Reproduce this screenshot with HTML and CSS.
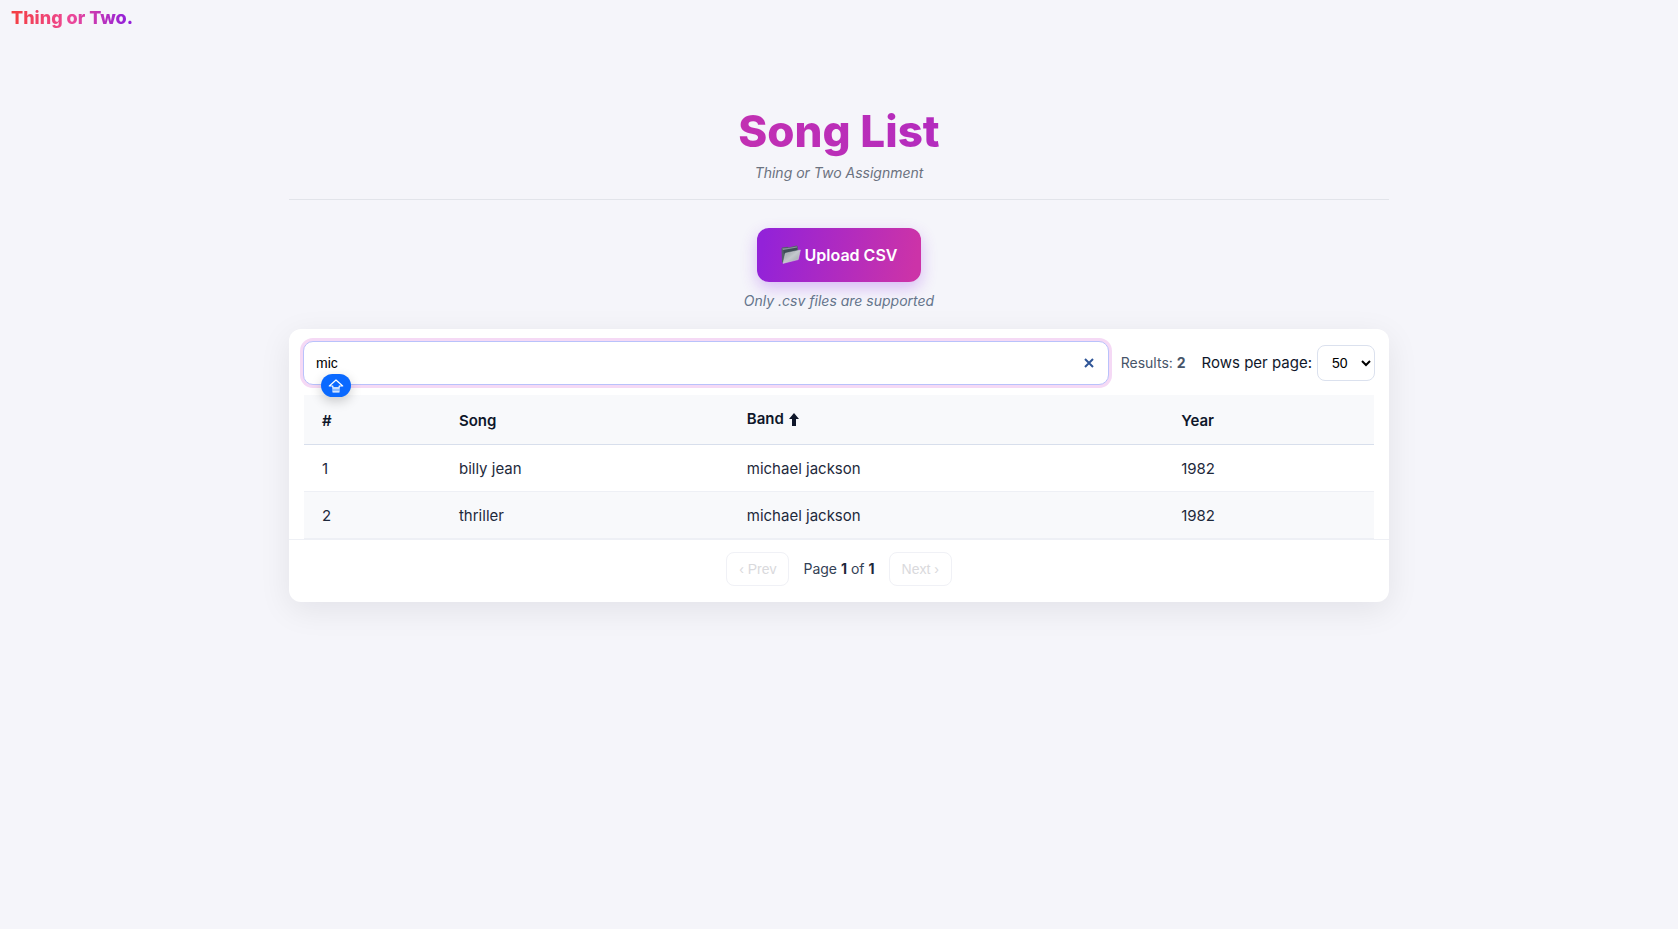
FILE: index.html
```html
<!DOCTYPE html>
<html lang="en">
<head>
<meta charset="utf-8">
<title>Song List</title>
<meta name="viewport" content="width=device-width, initial-scale=1">
<link rel="stylesheet" href="styles.css">
</head>
<body>
<nav class="topbar"><a class="brand" href="#">Thing or Two.</a></nav>
<main class="page">
  <header class="page-header">
    <h1 class="title">Song List</h1>
    <p class="subtitle">Thing or Two Assignment</p>
  </header>
  <section class="upload">
    <button class="upload-btn" type="button">
      <svg class="folder" viewBox="0 0 20 20" aria-hidden="true">
        <defs>
          <linearGradient id="front" x1="0" y1="0" x2="1" y2="1">
            <stop offset="0" stop-color="#8f979f"/><stop offset="0.5" stop-color="#c3c8cc"/><stop offset="1" stop-color="#9aa1a8"/>
          </linearGradient>
        </defs>
        <path d="M0.5 3.2 1.2 2.4 6.5 1.8 7.6 2.6 15.6.6 16.6 1.6 17 6 2 18 1 17z" fill="#52606a"/>
        <path d="M1.2 3.6 7 2.9 15.9 1.4 16.2 4.6 3 7z" fill="#8a949c"/>
        <path d="M2 5 16.2 2.6v3.4L3 9z" fill="#3f4d57"/>
        <path d="M4.4 8.2 19.4 5 17.2 14.6 2 18.4z" fill="url(#front)" stroke="#d3d7da" stroke-width=".5"/>
      </svg>
      <span>Upload CSV</span>
    </button>
    <p class="hint">Only .csv files are supported</p>
  </section>
  <section class="card">
    <div class="toolbar">
      <div class="search">
        <input class="search-input" type="text" value="mic" aria-label="Search songs">
        <button class="clear" type="button" aria-label="Clear search">
          <svg viewBox="0 0 10 10" aria-hidden="true"><path d="M1 1 9 9M9 1 1 9"/></svg>
        </button>
        <span class="caps" aria-hidden="true">
          <svg viewBox="0 0 16 14"><path d="M8 1 1.3 7H4.8V9H11.2V7H14.7z" fill="none" stroke="#fff" stroke-width="1.2" stroke-linejoin="round"/><path d="M4.2 8.4h7.6v5H4.2z" fill="#8fbcff"/><path d="M4.8 9h6.4M4.8 12.9h6.4" stroke="#fff" stroke-width="1"/></svg>
        </span>
      </div>
      <span class="results">Results: <strong>2</strong></span>
      <div class="rows">
        <label for="rows">Rows per page:</label>
        <span class="select-wrap">
          <select id="rows" class="select"><option>25</option><option selected>50</option><option>100</option></select>
          <svg class="chevron" viewBox="0 0 10 7" aria-hidden="true"><path d="M1 1 5 5 9 1"/></svg>
        </span>
      </div>
    </div>
    <div class="table-wrap">
      <table class="songs">
        <colgroup><col class="c-num"><col class="c-song"><col class="c-band"><col class="c-year"></colgroup>
        <thead><tr><th>#</th><th>Song</th><th class="sorted"><span class="sort">Band
          <svg class="arrow" viewBox="0 0 10 13" aria-hidden="true"><path d="M5 0 10 6H7v7H3V6H0z"/></svg></span></th><th>Year</th></tr></thead>
        <tbody>
          <tr><td>1</td><td>billy jean</td><td>michael jackson</td><td>1982</td></tr>
          <tr><td>2</td><td>thriller</td><td>michael jackson</td><td>1982</td></tr>
        </tbody>
      </table>
    </div>
    <div class="pager">
      <button class="page-btn" type="button" disabled>‹ Prev</button>
      <span class="page-info">Page <strong>1</strong> of <strong>1</strong></span>
      <button class="page-btn" type="button" disabled>Next ›</button>
    </div>
  </section>
</main>
</body>
</html>
```
FILE: styles.css
```css
* { box-sizing: border-box; }
body {
  margin: 0;
  min-height: 100vh;
  background: #f5f5fa;
  color: #0f172a;
  font: 16px/24px Inter, sans-serif;
}
h1, p { margin: 0; }
button, input, select { font: inherit; }

.topbar { display: flex; padding: 6px 11px; }
.brand {
  font-size: 18px;
  font-weight: 800;
  text-decoration: none;
  color: transparent;
  background: linear-gradient(90deg, #f43f3f, #ec4899 50%, #9320d9 95%);
  -webkit-background-clip: text;
  background-clip: text;
}

.page { max-width: 1132px; margin: 0 auto; padding: 68px 16px 48px; }
.page-header {
  padding-bottom: 14px;
  border-bottom: 1px solid #e2e4ea;
  text-align: center;
}
.title {
  margin-bottom: 3px;
  font-size: 44px;
  line-height: 54px;
  font-weight: 800;
  color: transparent;
  background: linear-gradient(90deg, #e23a98, #9322d8);
  -webkit-background-clip: text;
  background-clip: text;
}
.subtitle { font-size: 14px; font-style: italic; color: #6b7280; }

.upload {
  display: flex;
  flex-direction: column;
  align-items: center;
  gap: 7px;
  padding: 28px 0 16px;
}
.upload-btn {
  display: flex;
  align-items: center;
  gap: 4px;
  padding: 15px 24px;
  border: 0;
  border-radius: 12px;
  background: linear-gradient(100deg, #9322d8 5%, #cc33a8 95%);
  box-shadow: 0 6px 16px rgba(147, 51, 234, .3);
  color: #fff;
  font-weight: 600;
}
.folder { width: 20px; height: 20px; }
.hint { font-size: 14px; font-style: italic; color: #64748b; }

.card {
  background: #fff;
  border-radius: 12px;
  box-shadow: 0 8px 32px rgba(15, 15, 30, .08);
}
.toolbar { display: flex; align-items: center; gap: 16px; padding: 12px 14px 10px; }
.search { position: relative; flex: 1; display: flex; margin-right: -4px; }
.search-input {
  width: 100%;
  height: 44px;
  padding: 0 40px 0 12px;
  border: 1px solid #b9c2fb;
  border-radius: 10px;
  outline: 0;
  box-shadow: 0 0 0 3px #f5d9f5;
  font: 14px "Liberation Sans", sans-serif;
  color: #000;
}
.clear {
  position: absolute;
  top: 12px;
  right: 10px;
  display: grid;
  place-items: center;
  width: 20px;
  height: 20px;
  padding: 0;
  border: 0;
  background: none;
}
.clear svg { width: 10px; height: 10px; fill: none; stroke: #2f5597; stroke-width: 2; }
.caps {
  position: absolute;
  left: 18px;
  top: 33px;
  display: grid;
  place-items: center;
  width: 30px;
  height: 23px;
  border-radius: 12px;
  background: #0a69ff;
  box-shadow: 0 4px 12px rgba(0, 0, 0, .2);
}
.caps svg { width: 16px; height: 14px; }
.results { font-size: 14px; color: #475569; }
.rows { display: flex; align-items: center; gap: 5px; font-size: 15px; }
.select-wrap { position: relative; display: flex; }
.select {
  appearance: none;
  width: 58px;
  height: 36px;
  padding: 0 14px;
  border: 1px solid #dbe1ee;
  border-radius: 8px;
  background: #fff;
  color: #000;
  font: 14px "Liberation Sans", sans-serif;
}
.chevron {
  position: absolute;
  right: 4px;
  top: 15px;
  width: 10px;
  height: 7px;
  fill: none;
  stroke: #000;
  stroke-width: 2;
  pointer-events: none;
}

.table-wrap { padding: 0 15px; }
.songs { width: 100%; table-layout: fixed; border-collapse: separate; border-spacing: 0; font-size: 15px; }
.c-num { width: 12.8%; }
.c-song { width: 26.9%; }
.c-band { width: 40.6%; }
.songs th {
  height: 50px;
  padding: 2px 18px 0;
  background: #f8f9fb;
  border-bottom: 1px solid #d8dfec;
  text-align: left;
  font-weight: 600;
}
.songs .sorted { padding-bottom: 3px; }
.sort { display: inline-flex; align-items: center; gap: 5px; }
.arrow { width: 10px; height: 13px; fill: #0f172a; }
.songs td { height: 47px; padding: 1px 18px 0; border-bottom: 1px solid #eef0f5; color: #1e293b; }
.songs tbody tr:nth-child(even) { background: #f8f9fb; }

.pager {
  display: flex;
  justify-content: center;
  align-items: center;
  gap: 14px;
  padding: 12px 14px 16px;
  border-top: 1px solid #eef0f5;
}
.page-btn {
  height: 34px;
  padding: 0 12px;
  border: 1px solid #f0f1f6;
  border-radius: 8px;
  background: #fff;
  color: #d9d9dc;
  font: 14px "Liberation Sans", sans-serif;
}
.page-info { font-size: 14px; color: #334155; }
.page-info strong { color: #1e293b; }
```
